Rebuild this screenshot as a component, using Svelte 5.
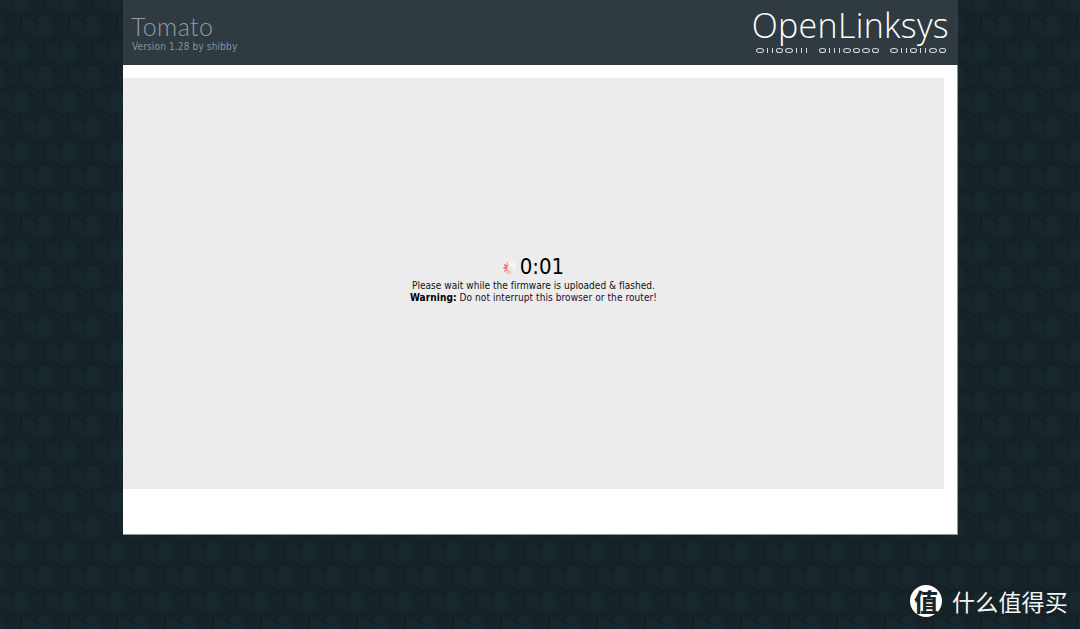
<script>
  const bytes = ['01100111', '01110000', '01101100'];
  const arm = (x, y, s, fill) => `<path d='M${x} ${y}L${x + s * 24} ${y + 13}V${y + 30}L${x} ${y + 17}z' fill='${fill}' stroke='#111c20'/><path d='M${x} ${y + 8}L${x + s * 24} ${y + 21}' fill='none' stroke='#14222780'/>`;
  const stem = (x, y) => `<path d='M${x - 8} ${y - 4}V${y - 21}L${x} ${y - 25}L${x + 8} ${y - 21}V${y - 4}L${x} ${y}z' fill='#17272e' stroke='#121e22'/><path d='M${x} ${y - 24}V${y}' stroke='#18292f'/>`;
  const arms = [];
  const stems = [];
  for (const dy of [-50, 0, 50]) {
    for (const dx of [-48, 0, 48]) {
      for (const [x, y] of [[21 + dx, 14 + dy], [45 + dx, 39 + dy]]) {
        arms.push(arm(x, y, -1, '#16242a'), arm(x, y, 1, '#17262b'));
        stems.push(stem(x, y));
      }
    }
  }
  const tile = `<svg xmlns='http://www.w3.org/2000/svg' width='48' height='50' viewBox='0 0 48 50'><rect width='48' height='50' fill='#152227'/>${arms.join('')}${stems.join('')}</svg>`;
  const pattern = `url("data:image/svg+xml,${encodeURIComponent(tile)}")`;
  const ticks = [
    ['#fdfdfd', 0], ['#fbfbfb', 30], ['#fafafa', 60], ['#fbf4f4', 90], ['#fbeaea', 120], ['#fadcdc', 150],
    ['#f9c6c6', 180], ['#f7a9a9', 210], ['#f58a8a', 240], ['#f26d6d', 270], ['#f06262', 300], ['#f6b4b4', 330]
  ];
</script>

<div class="page" style:background-image={pattern}>
  <div class="wrap">
    <header class="head">
      <div class="brand">
        <div class="title">Tomato</div>
        <div class="version">Version 1.28 by shibby</div>
      </div>
      <div class="logo">
        <div class="logo-name">OpenLinksys</div>
        <div class="logo-bits" role="img" aria-label={bytes.join(' ')}>
          {#each bytes as b}
            <span class="byte">
              {#each b.split('') as bit}
                <span class={bit === '0' ? 'zero' : 'one'}></span>
              {/each}
            </span>
          {/each}
        </div>
      </div>
    </header>
    <main class="body">
      <section class="panel">
        <div class="timer">
          <svg class="spin" width="14" height="14" viewBox="0 0 14 14" aria-hidden="true">
            {#each ticks as [color, angle]}
              <path d="M7 0.500V4.200" stroke={color} stroke-width="1.800" transform="rotate({angle} 7 7)" />
            {/each}
          </svg>
          <span class="clock">0:01</span>
        </div>
        <p class="msg">Please wait while the firmware is uploaded &amp; flashed.</p>
        <p class="msg wide"><b class="warn">Warning:</b> <span class="violet">Do not interrupt this browser or the router!</span></p>
      </section>
    </main>
  </div>
  <div class="mark">
    <span class="badge">值</span>
    <span class="mark-text">什么值得买</span>
  </div>
</div>

<style>
  :global(body) { margin: 0; }
  .page {
    position: relative;
    box-sizing: border-box;
    height: 629px;
    overflow: hidden;
    padding-left: 123px;
    background-color: #17262b;
    font-family: "DejaVu Sans", "Liberation Sans", sans-serif;
    font-stretch: condensed;
  }
  .wrap { width: 835px; }
  .head {
    box-sizing: border-box;
    height: 65px;
    display: flex;
    justify-content: space-between;
    background: #303b41;
    padding: 13px 9px 0 8px;
  }
  .title {
    font-family: Lato, "Liberation Sans", sans-serif;
    font-weight: 300;
    font-stretch: normal;
    font-size: 25px;
    line-height: 27px;
    color: #8f9ea2;
    letter-spacing: 0.4px;
  }
  .version {
    font-size: 10px;
    line-height: 12px;
    color: #7f93a3;
    letter-spacing: 0.14px;
    margin: 1px 0 0 1px;
  }
  .logo { margin-top: -7px; }
  .logo-name {
    font-family: "Open Sans", "Liberation Sans", sans-serif;
    font-weight: 300;
    font-stretch: normal;
    font-size: 34px;
    line-height: 38px;
    letter-spacing: 0.3px;
    color: #fff;
  }
  .logo-bits {
    display: flex;
    justify-content: flex-end;
    gap: 9px;
    margin-top: 4px;
    padding-right: 2px;
  }
  .byte { display: flex; align-items: center; height: 5px; }
  .zero {
    box-sizing: border-box;
    width: 7.500px;
    height: 5px;
    margin: 0 1px;
    border: 1px solid #d5dada;
    border-radius: 50%;
  }
  .one {
    width: 1px;
    height: 5px;
    margin: 0 2px;
    background: #d5dada;
  }
  .body {
    box-sizing: border-box;
    height: 470px;
    background: #fff;
    padding: 13px 13px 45px 0;
    border-right: 1px solid #8d9497;
    border-bottom: 1px solid #8d9497;
  }
  .panel {
    height: 100%;
    background: #ececec;
    display: flex;
    flex-direction: column;
    align-items: center;
    padding-top: 176px;
    box-sizing: border-box;
  }
  .timer { display: flex; align-items: center; gap: 3px; height: 26px; }
  .spin { margin-top: 2px; }
  .clock { font-size: 22px; line-height: 26px; color: #000; }
  .msg {
    margin: 0;
    font-size: 10px;
    line-height: 12px;
    color: #111;
    white-space: nowrap;
    letter-spacing: 0.04px;
  }
  .wide { letter-spacing: 0.08px; }
  .warn { color: #000; }
  .violet { color: #1c0b33; }
  .mark {
    position: absolute;
    left: 910px;
    top: 585px;
    display: flex;
    align-items: center;
    gap: 10px;
    font-family: "Noto Sans CJK SC", sans-serif;
    font-stretch: normal;
  }
  .badge {
    width: 32px;
    height: 32px;
    border-radius: 50%;
    background: #fff;
    color: #1b2529;
    font-size: 24px;
    font-weight: 900;
    line-height: 32px;
    text-align: center;
  }
  .mark-text { font-size: 23px; line-height: 32px; color: #f4f6f6; letter-spacing: 0.2px; }
</style>
